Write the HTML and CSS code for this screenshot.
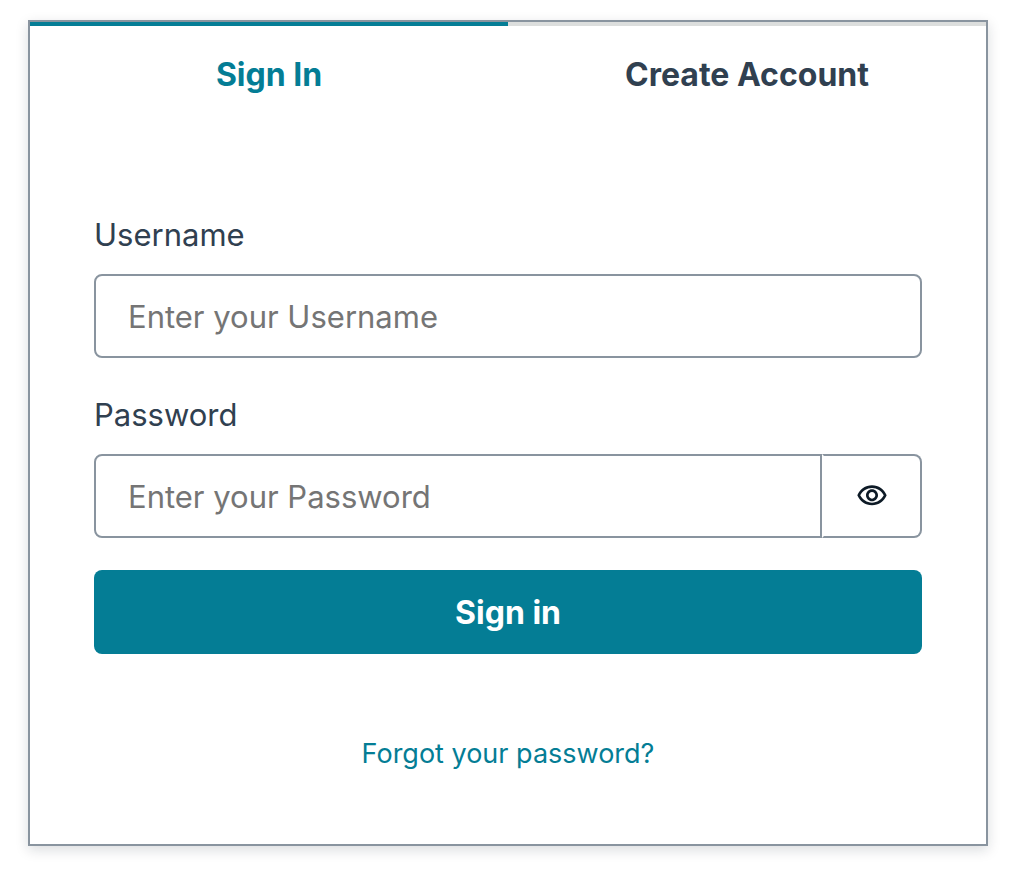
FILE: index.html
```html
<!DOCTYPE html>
<html lang="en">
  <head>
    <meta charset="UTF-8" />
    <meta name="viewport" content="width=device-width, initial-scale=1.0" />
    <title>Sign In</title>
    <link rel="stylesheet" href="styles.css">
  </head>
  <body>
    <main class="card">
      <div class="tabs" role="tablist">
        <button type="button" class="tab active" role="tab" aria-selected="true">Sign In</button>
        <button type="button" class="tab" role="tab" aria-selected="false">Create Account</button>
      </div>
      <form action="">
        <div class="field">
          <label for="username">Username</label>
          <input type="text" name="username" id="username" placeholder="Enter your Username" required />
        </div>
        <div class="field">
          <label for="password">Password</label>
          <div class="password">
            <input type="password" name="password" id="password" placeholder="Enter your Password" required />
            <button type="button" class="show" aria-label="Show password">
              <svg viewBox="0 0 24 24" aria-hidden="true">
                <path d="M12 6C15.79 6 19.17 8.13 20.82 11.5C19.17 14.87 15.79 17 12 17C8.21 17 4.83 14.87 3.18 11.5C4.83 8.13 8.21 6 12 6ZM12 4C7 4 2.73 7.11 1 11.5C2.73 15.89 7 19 12 19C17 19 21.27 15.89 23 11.5C21.27 7.11 17 4 12 4ZM12 9C13.38 9 14.5 10.12 14.5 11.5C14.5 12.88 13.38 14 12 14C10.62 14 9.5 12.88 9.5 11.5C9.5 10.12 10.62 9 12 9ZM12 7C9.52 7 7.5 9.02 7.5 11.5C7.5 13.98 9.52 16 12 16C14.48 16 16.5 13.98 16.5 11.5C16.5 9.02 14.48 7 12 7Z" />
              </svg>
            </button>
          </div>
        </div>
        <button type="submit" class="submit">Sign in</button>
      </form>
      <footer><a href="#forgot">Forgot your password?</a></footer>
    </main>
  </body>
</html>
```
FILE: styles.css
```css
* {
    box-sizing: border-box;
    margin: 0;
    padding: 0;
}
body {
    padding: 20px 34px 28px 28px;
    font-family: Inter, "Liberation Sans", sans-serif;
    font-size: 31px;
    line-height: 50px;
    color: #304050;
    background-color: #fff;
}
input, button {
    font: inherit;
    color: inherit;
}
button {
    cursor: pointer;
}
.card {
    border: 2px solid #89949f;
    background-color: #fff;
    box-shadow: 0 4px 12px rgba(13, 26, 38, 0.15);
}
.tabs {
    display: grid;
    grid-template-columns: 1fr 1fr;
}
.tab {
    padding: 24px 32px 22px;
    border: 0;
    border-top: 4px solid #dcdedd;
    background: none;
    font-size: 32px;
    font-weight: 700;
}
.tab.active {
    border-color: #047d95;
    color: #047d95;
}
form {
    display: flex;
    flex-direction: column;
    gap: 32px;
    padding: 88px 64px 64px;
}
.field {
    display: flex;
    flex-direction: column;
    gap: 14px;
}
input {
    width: 100%;
    padding: 16px 32px;
    border: 2px solid #89949f;
    border-radius: 8px;
    background-color: #fff;
    height: 84px;
}
input::placeholder {
    color: #757575;
}
.password {
    display: flex;
}
/* The input and the eye button look like one box */
.password input {
    flex: 1;
    min-width: 0;
    border-radius: 8px 0 0 8px;
}
.show {
    display: flex;
    align-items: center;
    justify-content: center;
    width: 100px;
    border: 2px solid #89949f;
    border-left-color: transparent;
    border-radius: 0 8px 8px 0;
    background: none;
}
.show svg {
    width: 32px;
    height: 32px;
    fill: #0d1a26;
}
.submit {
    padding: 18px 32px 16px;
    border: 0;
    border-radius: 8px;
    background-color: #047d95;
    color: #fff;
    font-size: 32px;
    font-weight: 700;
}
footer {
    padding: 14px 64px 68px;
    text-align: center;
    font-size: 27px;
    line-height: 44px;
}
footer a {
    color: #047d95;
    text-decoration: none;
}
```
